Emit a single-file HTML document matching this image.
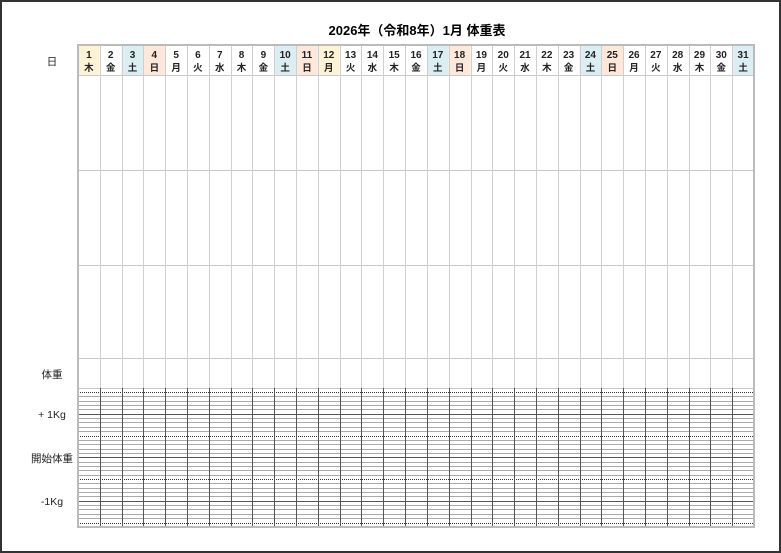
<!DOCTYPE html>
<html><head><meta charset="utf-8"><style>
html,body{margin:0;padding:0;background:#fff;}
body{width:781px;height:553px;overflow:hidden;position:relative;font-family:"Liberation Sans","Noto Sans CJK JP",sans-serif;}
#frame{position:absolute;left:0;top:0;width:777px;height:549px;border:2px solid #333;}
svg{position:absolute;left:0;top:0;}
text{font-family:"Liberation Sans","Noto Sans CJK JP",sans-serif;}
</style></head><body>
<div id="frame"></div>
<svg id="s" width="781" height="553" xmlns="http://www.w3.org/2000/svg"></svg>
<script>
const s=document.getElementById('s');
let h='';
const L=78,R=754,W=(R-L)/31;
const wd=['木','金','土','日','月','火','水'];
const yel=[1,12],ora=[4,11,18,25],blu=[3,10,17,24,31];
h+='<text x="417" y="35" text-anchor="middle" font-size="13" font-weight="bold" fill="#000">2026年（令和8年）1月 体重表</text>';
for(let d=1;d<=31;d++){
 const x=L+(d-1)*W;
 let c='#fff';
 if(yel.includes(d))c='#fff3d6';else if(ora.includes(d))c='#fde8d9';else if(blu.includes(d))c='#dbeef4';
 h+=`<rect x="${x}" y="45" width="${W}" height="30" fill="${c}"/>`;
 h+=`<text x="${x+W/2}" y="58" text-anchor="middle" font-size="10" font-weight="bold" fill="#222">${d}</text>`;
 h+=`<text x="${x+W/2}" y="71" text-anchor="middle" font-size="9.5" font-weight="bold" fill="#222">${wd[(d-1)%7]}</text>`;
}
// horizontal lines upper
[45,75,170,265,358,388].forEach(y=>{h+=`<line x1="${L}" x2="${R}" y1="${y+.5}" y2="${y+.5}" stroke="#c8c8c8" stroke-width="1"/>`;});
for(let d=1;d<31;d++){const x=Math.round(L+d*W)+.5;h+=`<line x1="${x}" x2="${x}" y1="45" y2="388" stroke="#cfcfcf"/>`;}
// weight section
for(let k=0;k<=30;k++){
 const y=Math.round(392+k*4.35)+.5;
 if(k%10==0) h+=`<line x1="${L}" x2="${R}" y1="${y}" y2="${y}" stroke="#333" stroke-dasharray="1,1"/>`;
 else if(k%5==0) h+=`<line x1="${L}" x2="${R}" y1="${y}" y2="${y}" stroke="#555"/>`;
 else h+=`<line x1="${L}" x2="${R}" y1="${y}" y2="${y}" stroke="#aaa"/>`;
}
for(let d=1;d<31;d++){const x=Math.round(L+d*W)+.5;h+=`<line x1="${x}" x2="${x}" y1="388" y2="527" stroke="#555"/>`;}
h+=`<rect x="${L}" y="45" width="${R-L}" height="482" fill="none" stroke="#bbb" stroke-width="2"/>`;
const lab=[['日',65],['体重',378],['+ 1Kg',418],['開始体重',462],['-1Kg',505]];
lab.forEach(a=>{h+=`<text x="52" y="${a[1]}" text-anchor="middle" font-size="10.5" fill="#222">${a[0]}</text>`;});
s.innerHTML=h;
</script>
</body></html>
